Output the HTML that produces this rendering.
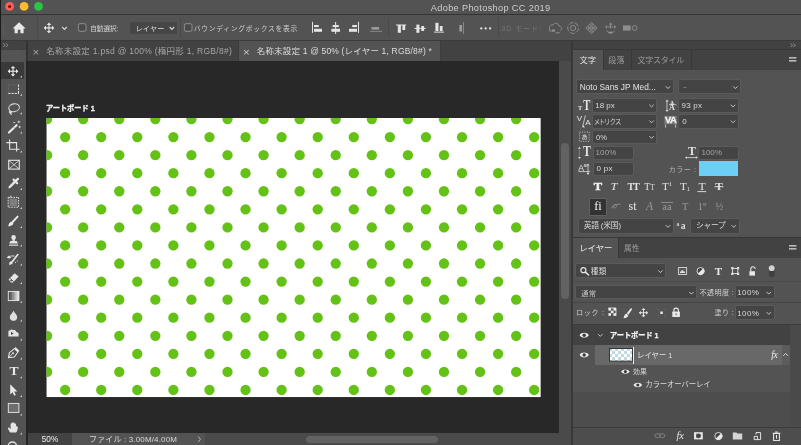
<!DOCTYPE html>
<html lang="ja">
<head>
<meta charset="utf-8">
<title>Adobe Photoshop CC 2019</title>
<style>
*{box-sizing:border-box;margin:0;padding:0}
html,body{width:801px;height:445px;overflow:hidden;background:#535353}
body{position:relative;font-family:"Liberation Sans","Noto Sans CJK JP",sans-serif;font-size:8px;color:#d6d6d6;line-height:12px}
.a{position:absolute}
.t{position:absolute;white-space:nowrap;line-height:12px;height:12px;transform-origin:0 50%}
.f{position:absolute;background:#444444;border-radius:1.2px;box-shadow:0 0 0 0.8px #5d5d5d}
.s{position:absolute;white-space:nowrap;font-family:"Liberation Serif",serif;font-weight:bold;line-height:14px;height:14px;color:#e4e4e4;text-align:center}
svg{position:absolute;left:0;top:0;overflow:visible}
</style>
</head>
<body>
<!-- ===== title bar ===== -->
<div class="a" style="left:0;top:0;width:801px;height:14px;background:#535353"></div>
<div class="a" style="left:0;top:14px;width:801px;height:1px;background:#343434"></div>

<!-- ===== options bar ===== -->
<div class="a" style="left:0;top:15px;width:801px;height:25px;background:#535353"></div>
<div class="a" style="left:0;top:40px;width:801px;height:1px;background:#3b3b3b"></div>
<div class="a" style="left:37px;top:16px;width:1px;height:23px;background:#4a4a4a"></div>
<div class="a" style="left:180px;top:18px;width:1px;height:19px;background:#4a4a4a"></div>
<div class="a" style="left:388px;top:18px;width:1px;height:19px;background:#4a4a4a"></div>
<div class="a" style="left:498px;top:18px;width:1px;height:19px;background:#4a4a4a"></div>
<div class="f" style="left:129.5px;top:22px;width:47.5px;height:12px;box-shadow:none;background:#464646"></div>

<!-- ===== document tab row ===== -->
<div class="a" style="left:27.5px;top:41px;width:543.5px;height:20.3px;background:#424242"></div>
<div class="a" style="left:238.6px;top:41px;width:201.6px;height:20.3px;background:#535353"></div>
<div class="a" style="left:237.8px;top:41px;width:0.8px;height:20px;background:#3b3b3b"></div>
<div class="a" style="left:440px;top:41px;width:1px;height:20px;background:#3d3d3d"></div>

<!-- ===== canvas area ===== -->
<div class="a" style="left:28px;top:61.3px;width:531px;height:371.7px;background:#282828"></div>
<svg style="left:0;top:0" width="801" height="445" viewBox="0 0 801 445">
<defs><clipPath id="cp"><rect x="46.55" y="118" width="494.1" height="279.05"/></clipPath></defs>
<rect x="46.55" y="118" width="494.1" height="279.05" fill="#ffffff"/>
<g clip-path="url(#cp)" fill="#63c215">
<circle cx="47.10" cy="119.00" r="5.15"/>
<circle cx="83.18" cy="119.00" r="5.15"/>
<circle cx="119.26" cy="119.00" r="5.15"/>
<circle cx="155.34" cy="119.00" r="5.15"/>
<circle cx="191.42" cy="119.00" r="5.15"/>
<circle cx="227.50" cy="119.00" r="5.15"/>
<circle cx="263.58" cy="119.00" r="5.15"/>
<circle cx="299.66" cy="119.00" r="5.15"/>
<circle cx="335.74" cy="119.00" r="5.15"/>
<circle cx="371.82" cy="119.00" r="5.15"/>
<circle cx="407.90" cy="119.00" r="5.15"/>
<circle cx="443.98" cy="119.00" r="5.15"/>
<circle cx="480.06" cy="119.00" r="5.15"/>
<circle cx="516.14" cy="119.00" r="5.15"/>
<circle cx="65.14" cy="137.06" r="5.15"/>
<circle cx="101.22" cy="137.06" r="5.15"/>
<circle cx="137.30" cy="137.06" r="5.15"/>
<circle cx="173.38" cy="137.06" r="5.15"/>
<circle cx="209.46" cy="137.06" r="5.15"/>
<circle cx="245.54" cy="137.06" r="5.15"/>
<circle cx="281.62" cy="137.06" r="5.15"/>
<circle cx="317.70" cy="137.06" r="5.15"/>
<circle cx="353.78" cy="137.06" r="5.15"/>
<circle cx="389.86" cy="137.06" r="5.15"/>
<circle cx="425.94" cy="137.06" r="5.15"/>
<circle cx="462.02" cy="137.06" r="5.15"/>
<circle cx="498.10" cy="137.06" r="5.15"/>
<circle cx="534.18" cy="137.06" r="5.15"/>
<circle cx="47.10" cy="155.13" r="5.15"/>
<circle cx="83.18" cy="155.13" r="5.15"/>
<circle cx="119.26" cy="155.13" r="5.15"/>
<circle cx="155.34" cy="155.13" r="5.15"/>
<circle cx="191.42" cy="155.13" r="5.15"/>
<circle cx="227.50" cy="155.13" r="5.15"/>
<circle cx="263.58" cy="155.13" r="5.15"/>
<circle cx="299.66" cy="155.13" r="5.15"/>
<circle cx="335.74" cy="155.13" r="5.15"/>
<circle cx="371.82" cy="155.13" r="5.15"/>
<circle cx="407.90" cy="155.13" r="5.15"/>
<circle cx="443.98" cy="155.13" r="5.15"/>
<circle cx="480.06" cy="155.13" r="5.15"/>
<circle cx="516.14" cy="155.13" r="5.15"/>
<circle cx="65.14" cy="173.19" r="5.15"/>
<circle cx="101.22" cy="173.19" r="5.15"/>
<circle cx="137.30" cy="173.19" r="5.15"/>
<circle cx="173.38" cy="173.19" r="5.15"/>
<circle cx="209.46" cy="173.19" r="5.15"/>
<circle cx="245.54" cy="173.19" r="5.15"/>
<circle cx="281.62" cy="173.19" r="5.15"/>
<circle cx="317.70" cy="173.19" r="5.15"/>
<circle cx="353.78" cy="173.19" r="5.15"/>
<circle cx="389.86" cy="173.19" r="5.15"/>
<circle cx="425.94" cy="173.19" r="5.15"/>
<circle cx="462.02" cy="173.19" r="5.15"/>
<circle cx="498.10" cy="173.19" r="5.15"/>
<circle cx="534.18" cy="173.19" r="5.15"/>
<circle cx="47.10" cy="191.26" r="5.15"/>
<circle cx="83.18" cy="191.26" r="5.15"/>
<circle cx="119.26" cy="191.26" r="5.15"/>
<circle cx="155.34" cy="191.26" r="5.15"/>
<circle cx="191.42" cy="191.26" r="5.15"/>
<circle cx="227.50" cy="191.26" r="5.15"/>
<circle cx="263.58" cy="191.26" r="5.15"/>
<circle cx="299.66" cy="191.26" r="5.15"/>
<circle cx="335.74" cy="191.26" r="5.15"/>
<circle cx="371.82" cy="191.26" r="5.15"/>
<circle cx="407.90" cy="191.26" r="5.15"/>
<circle cx="443.98" cy="191.26" r="5.15"/>
<circle cx="480.06" cy="191.26" r="5.15"/>
<circle cx="516.14" cy="191.26" r="5.15"/>
<circle cx="65.14" cy="209.32" r="5.15"/>
<circle cx="101.22" cy="209.32" r="5.15"/>
<circle cx="137.30" cy="209.32" r="5.15"/>
<circle cx="173.38" cy="209.32" r="5.15"/>
<circle cx="209.46" cy="209.32" r="5.15"/>
<circle cx="245.54" cy="209.32" r="5.15"/>
<circle cx="281.62" cy="209.32" r="5.15"/>
<circle cx="317.70" cy="209.32" r="5.15"/>
<circle cx="353.78" cy="209.32" r="5.15"/>
<circle cx="389.86" cy="209.32" r="5.15"/>
<circle cx="425.94" cy="209.32" r="5.15"/>
<circle cx="462.02" cy="209.32" r="5.15"/>
<circle cx="498.10" cy="209.32" r="5.15"/>
<circle cx="534.18" cy="209.32" r="5.15"/>
<circle cx="47.10" cy="227.39" r="5.15"/>
<circle cx="83.18" cy="227.39" r="5.15"/>
<circle cx="119.26" cy="227.39" r="5.15"/>
<circle cx="155.34" cy="227.39" r="5.15"/>
<circle cx="191.42" cy="227.39" r="5.15"/>
<circle cx="227.50" cy="227.39" r="5.15"/>
<circle cx="263.58" cy="227.39" r="5.15"/>
<circle cx="299.66" cy="227.39" r="5.15"/>
<circle cx="335.74" cy="227.39" r="5.15"/>
<circle cx="371.82" cy="227.39" r="5.15"/>
<circle cx="407.90" cy="227.39" r="5.15"/>
<circle cx="443.98" cy="227.39" r="5.15"/>
<circle cx="480.06" cy="227.39" r="5.15"/>
<circle cx="516.14" cy="227.39" r="5.15"/>
<circle cx="65.14" cy="245.46" r="5.15"/>
<circle cx="101.22" cy="245.46" r="5.15"/>
<circle cx="137.30" cy="245.46" r="5.15"/>
<circle cx="173.38" cy="245.46" r="5.15"/>
<circle cx="209.46" cy="245.46" r="5.15"/>
<circle cx="245.54" cy="245.46" r="5.15"/>
<circle cx="281.62" cy="245.46" r="5.15"/>
<circle cx="317.70" cy="245.46" r="5.15"/>
<circle cx="353.78" cy="245.46" r="5.15"/>
<circle cx="389.86" cy="245.46" r="5.15"/>
<circle cx="425.94" cy="245.46" r="5.15"/>
<circle cx="462.02" cy="245.46" r="5.15"/>
<circle cx="498.10" cy="245.46" r="5.15"/>
<circle cx="534.18" cy="245.46" r="5.15"/>
<circle cx="47.10" cy="263.52" r="5.15"/>
<circle cx="83.18" cy="263.52" r="5.15"/>
<circle cx="119.26" cy="263.52" r="5.15"/>
<circle cx="155.34" cy="263.52" r="5.15"/>
<circle cx="191.42" cy="263.52" r="5.15"/>
<circle cx="227.50" cy="263.52" r="5.15"/>
<circle cx="263.58" cy="263.52" r="5.15"/>
<circle cx="299.66" cy="263.52" r="5.15"/>
<circle cx="335.74" cy="263.52" r="5.15"/>
<circle cx="371.82" cy="263.52" r="5.15"/>
<circle cx="407.90" cy="263.52" r="5.15"/>
<circle cx="443.98" cy="263.52" r="5.15"/>
<circle cx="480.06" cy="263.52" r="5.15"/>
<circle cx="516.14" cy="263.52" r="5.15"/>
<circle cx="65.14" cy="281.59" r="5.15"/>
<circle cx="101.22" cy="281.59" r="5.15"/>
<circle cx="137.30" cy="281.59" r="5.15"/>
<circle cx="173.38" cy="281.59" r="5.15"/>
<circle cx="209.46" cy="281.59" r="5.15"/>
<circle cx="245.54" cy="281.59" r="5.15"/>
<circle cx="281.62" cy="281.59" r="5.15"/>
<circle cx="317.70" cy="281.59" r="5.15"/>
<circle cx="353.78" cy="281.59" r="5.15"/>
<circle cx="389.86" cy="281.59" r="5.15"/>
<circle cx="425.94" cy="281.59" r="5.15"/>
<circle cx="462.02" cy="281.59" r="5.15"/>
<circle cx="498.10" cy="281.59" r="5.15"/>
<circle cx="534.18" cy="281.59" r="5.15"/>
<circle cx="47.10" cy="299.65" r="5.15"/>
<circle cx="83.18" cy="299.65" r="5.15"/>
<circle cx="119.26" cy="299.65" r="5.15"/>
<circle cx="155.34" cy="299.65" r="5.15"/>
<circle cx="191.42" cy="299.65" r="5.15"/>
<circle cx="227.50" cy="299.65" r="5.15"/>
<circle cx="263.58" cy="299.65" r="5.15"/>
<circle cx="299.66" cy="299.65" r="5.15"/>
<circle cx="335.74" cy="299.65" r="5.15"/>
<circle cx="371.82" cy="299.65" r="5.15"/>
<circle cx="407.90" cy="299.65" r="5.15"/>
<circle cx="443.98" cy="299.65" r="5.15"/>
<circle cx="480.06" cy="299.65" r="5.15"/>
<circle cx="516.14" cy="299.65" r="5.15"/>
<circle cx="65.14" cy="317.72" r="5.15"/>
<circle cx="101.22" cy="317.72" r="5.15"/>
<circle cx="137.30" cy="317.72" r="5.15"/>
<circle cx="173.38" cy="317.72" r="5.15"/>
<circle cx="209.46" cy="317.72" r="5.15"/>
<circle cx="245.54" cy="317.72" r="5.15"/>
<circle cx="281.62" cy="317.72" r="5.15"/>
<circle cx="317.70" cy="317.72" r="5.15"/>
<circle cx="353.78" cy="317.72" r="5.15"/>
<circle cx="389.86" cy="317.72" r="5.15"/>
<circle cx="425.94" cy="317.72" r="5.15"/>
<circle cx="462.02" cy="317.72" r="5.15"/>
<circle cx="498.10" cy="317.72" r="5.15"/>
<circle cx="534.18" cy="317.72" r="5.15"/>
<circle cx="47.10" cy="335.78" r="5.15"/>
<circle cx="83.18" cy="335.78" r="5.15"/>
<circle cx="119.26" cy="335.78" r="5.15"/>
<circle cx="155.34" cy="335.78" r="5.15"/>
<circle cx="191.42" cy="335.78" r="5.15"/>
<circle cx="227.50" cy="335.78" r="5.15"/>
<circle cx="263.58" cy="335.78" r="5.15"/>
<circle cx="299.66" cy="335.78" r="5.15"/>
<circle cx="335.74" cy="335.78" r="5.15"/>
<circle cx="371.82" cy="335.78" r="5.15"/>
<circle cx="407.90" cy="335.78" r="5.15"/>
<circle cx="443.98" cy="335.78" r="5.15"/>
<circle cx="480.06" cy="335.78" r="5.15"/>
<circle cx="516.14" cy="335.78" r="5.15"/>
<circle cx="65.14" cy="353.85" r="5.15"/>
<circle cx="101.22" cy="353.85" r="5.15"/>
<circle cx="137.30" cy="353.85" r="5.15"/>
<circle cx="173.38" cy="353.85" r="5.15"/>
<circle cx="209.46" cy="353.85" r="5.15"/>
<circle cx="245.54" cy="353.85" r="5.15"/>
<circle cx="281.62" cy="353.85" r="5.15"/>
<circle cx="317.70" cy="353.85" r="5.15"/>
<circle cx="353.78" cy="353.85" r="5.15"/>
<circle cx="389.86" cy="353.85" r="5.15"/>
<circle cx="425.94" cy="353.85" r="5.15"/>
<circle cx="462.02" cy="353.85" r="5.15"/>
<circle cx="498.10" cy="353.85" r="5.15"/>
<circle cx="534.18" cy="353.85" r="5.15"/>
<circle cx="47.10" cy="371.91" r="5.15"/>
<circle cx="83.18" cy="371.91" r="5.15"/>
<circle cx="119.26" cy="371.91" r="5.15"/>
<circle cx="155.34" cy="371.91" r="5.15"/>
<circle cx="191.42" cy="371.91" r="5.15"/>
<circle cx="227.50" cy="371.91" r="5.15"/>
<circle cx="263.58" cy="371.91" r="5.15"/>
<circle cx="299.66" cy="371.91" r="5.15"/>
<circle cx="335.74" cy="371.91" r="5.15"/>
<circle cx="371.82" cy="371.91" r="5.15"/>
<circle cx="407.90" cy="371.91" r="5.15"/>
<circle cx="443.98" cy="371.91" r="5.15"/>
<circle cx="480.06" cy="371.91" r="5.15"/>
<circle cx="516.14" cy="371.91" r="5.15"/>
<circle cx="65.14" cy="389.98" r="5.15"/>
<circle cx="101.22" cy="389.98" r="5.15"/>
<circle cx="137.30" cy="389.98" r="5.15"/>
<circle cx="173.38" cy="389.98" r="5.15"/>
<circle cx="209.46" cy="389.98" r="5.15"/>
<circle cx="245.54" cy="389.98" r="5.15"/>
<circle cx="281.62" cy="389.98" r="5.15"/>
<circle cx="317.70" cy="389.98" r="5.15"/>
<circle cx="353.78" cy="389.98" r="5.15"/>
<circle cx="389.86" cy="389.98" r="5.15"/>
<circle cx="425.94" cy="389.98" r="5.15"/>
<circle cx="462.02" cy="389.98" r="5.15"/>
<circle cx="498.10" cy="389.98" r="5.15"/>
<circle cx="534.18" cy="389.98" r="5.15"/>
</g></svg>

<!-- vertical scrollbar -->
<div class="a" style="left:559px;top:61px;width:12px;height:384px;background:#4a4a4a"></div>
<div class="a" style="left:561px;top:142.5px;width:8px;height:156px;border-radius:4px;background:#626262"></div>

<!-- ===== status bar ===== -->
<div class="a" style="left:28px;top:433px;width:531px;height:12px;background:#4a4a4a"></div>
<div class="a" style="left:28px;top:433px;width:44px;height:12px;background:#424242"></div>
<div class="a" style="left:72px;top:433px;width:133px;height:12px;background:#535353"></div>
<div class="a" style="left:306px;top:436px;width:132px;height:7px;border-radius:3.5px;background:#626262"></div>

<!-- ===== left toolbar ===== -->
<div class="a" style="left:0;top:41px;width:27.5px;height:20.3px;background:#333333"></div><div class="a" style="left:0;top:61.3px;width:28.2px;height:384px;background:#242424"></div>
<div class="a" style="left:1px;top:41px;width:25.3px;height:8.6px;background:#424242"></div>
<div class="a" style="left:1px;top:49.6px;width:25.3px;height:395.4px;background:#535353"></div>
<div class="a" style="left:1.2px;top:62.3px;width:23px;height:16.7px;background:#3a3a3a"></div>
<div class="a" style="left:0;top:0;width:1.2px;height:445px;background:#1c1c1c"></div>

<!-- ===== right panels ===== -->
<div class="a" style="left:571px;top:41px;width:230px;height:404px;background:#383838"></div>
<div class="a" style="left:573px;top:41px;width:228px;height:8px;background:#424242"></div>
<!-- character panel -->
<div class="a" style="left:573px;top:49.5px;width:228px;height:20.5px;background:#424242"></div>
<div class="a" style="left:573px;top:49.5px;width:29.5px;height:20.5px;background:#535353"></div>
<div class="a" style="left:602.5px;top:49.5px;width:1px;height:20.5px;background:#383838"></div>
<div class="a" style="left:631px;top:49.5px;width:1px;height:20.5px;background:#383838"></div>
<div class="a" style="left:691px;top:49.5px;width:1px;height:20.5px;background:#383838"></div>
<div class="a" style="left:573px;top:70px;width:228px;height:167px;background:#535353"></div>
<div class="f" style="left:577px;top:80px;width:96px;height:12.5px"></div>
<div class="f" style="left:678.5px;top:80px;width:61px;height:12.5px"></div>
<div class="f" style="left:593px;top:99px;width:63px;height:12.5px"></div>
<div class="f" style="left:678.5px;top:99px;width:59.5px;height:12.5px"></div>
<div class="f" style="left:593px;top:115px;width:63px;height:12.5px"></div>
<div class="f" style="left:678.5px;top:115px;width:59.5px;height:12.5px"></div>
<div class="f" style="left:593px;top:130.5px;width:63px;height:12.5px"></div>
<div class="f" style="left:593.5px;top:146.5px;width:39.5px;height:12px"></div>
<div class="f" style="left:699px;top:146.5px;width:39px;height:12px"></div>
<div class="f" style="left:593.5px;top:162.5px;width:39.5px;height:12px"></div>
<div class="a" style="left:698.7px;top:160.5px;width:39.6px;height:15.4px;background:#6ecff6"></div>
<div class="a" style="left:590px;top:199px;width:16px;height:15.6px;background:#333333;box-shadow:0 0 0 0.6px #6a6a6a"></div>
<div class="f" style="left:578.5px;top:219px;width:94.5px;height:13.5px"></div>
<div class="f" style="left:690.5px;top:219px;width:48px;height:13.5px"></div>
<!-- layers panel -->
<div class="a" style="left:573px;top:238px;width:228px;height:20px;background:#424242"></div>
<div class="a" style="left:573px;top:238px;width:45px;height:20px;background:#535353"></div>
<div class="a" style="left:618px;top:238px;width:1px;height:20px;background:#383838"></div>
<div class="a" style="left:573px;top:258px;width:228px;height:187px;background:#535353"></div>
<div class="f" style="left:576px;top:264px;width:89px;height:13px"></div>
<div class="f" style="left:576px;top:285.5px;width:120px;height:12.5px"></div>
<div class="f" style="left:735.5px;top:285.5px;width:38.5px;height:12.5px"></div>
<div class="a" style="left:573px;top:302px;width:228px;height:1px;background:#454545"></div>
<div class="f" style="left:735.5px;top:305.5px;width:38.5px;height:13.5px"></div>
<div class="a" style="left:573px;top:323.5px;width:228px;height:1px;background:#3c3c3c"></div>
<div class="a" style="left:573px;top:324.5px;width:217px;height:20px;background:#424242"></div>
<div class="a" style="left:573px;top:344.5px;width:217px;height:47.5px;background:#535353"></div>
<div class="a" style="left:595px;top:345px;width:187px;height:19.5px;background:#686868"></div>
<div class="a" style="left:782px;top:345px;width:8px;height:19.5px;background:#5c5c5c"></div>
<div class="a" style="left:573px;top:392px;width:217px;height:35px;background:#4d4d4d"></div>
<div class="a" style="left:790px;top:324.5px;width:11px;height:102.5px;background:#4a4a4a"></div>
<div class="a" style="left:573px;top:427px;width:228px;height:1px;background:#3c3c3c"></div>
<div class="a" style="left:573px;top:428px;width:228px;height:17px;background:#4d4d4d"></div>
<!-- layer thumbnail -->
<svg style="left:609px;top:348px" width="24" height="14" viewBox="0 0 24 14">
  <defs><pattern id="chk" width="6" height="6" patternUnits="userSpaceOnUse"><rect width="6" height="6" fill="#fdfdfd"/><rect width="3" height="3" fill="#c2d9e2"/><rect x="3" y="3" width="3" height="3" fill="#c2d9e2"/></pattern></defs>
  <rect x="0.5" y="0.5" width="23" height="12.6" fill="url(#chk)" stroke="#2c2c2c" stroke-width="0.9"/>
</svg>
<div class="a" style="left:633.3px;top:346.5px;width:0.9px;height:17px;background:#f0f0f0"></div>

<div class="a" id="fg" style="left:0;top:0;width:801px;height:445px;will-change:transform;filter:blur(0.45px)">
<!-- panel icons -->
<svg width="801" height="445" viewBox="0 0 801 445">
  <defs>
    <g id="chev"><path d="M-2.2 -1.05 L0 1.15 L2.2 -1.05" fill="none" stroke="#d4d4d4" stroke-width="0.9"/></g>
    <g id="eye"><path d="M-4.6 0 C-3 -3.2 3 -3.2 4.6 0 C3 3.2 -3 3.2 -4.6 0 Z" fill="#ededed"/><circle cx="0" cy="0" r="1.7" fill="#3c3c3c"/></g>
  </defs>
  <!-- dropdown chevrons -->
  <use href="#chev" x="667.9" y="87.4"/><use href="#chev" x="735.4" y="87.4"/>
  <use href="#chev" x="651.6" y="105.8"/><use href="#chev" x="733" y="105.8"/>
  <use href="#chev" x="651.6" y="121.6"/><use href="#chev" x="733" y="121.6"/>
  <use href="#chev" x="651.6" y="137.2"/>
  <use href="#chev" x="667.9" y="226.2"/><use href="#chev" x="733.8" y="226.2"/>
  <use href="#chev" x="660.4" y="271.4"/>
  <use href="#chev" x="691.4" y="293"/><use href="#chev" x="768.8" y="293"/><use href="#chev" x="768.8" y="313.2"/>
  <!-- character icons: arrows & decorations -->
  <g fill="none" stroke="#dcdcdc" stroke-width="0.8">
    <!-- leading arrow -->
    <path d="M667 101 V110.4"/>
    <!-- kerning slash -->
    <path d="M585.4 115.4 L582.6 126.6"/>
    <!-- tracking bar -->
    <path d="M665.6 124.6 V127.6 M675.6 124.6 V127.6"/><path d="M669 104.7 H676.4" stroke-width="0.7"/>
    <!-- tsume box -->
    <rect x="579.6" y="132" width="9.6" height="9.4" stroke-dasharray="1.1 1.3" stroke-width="0.7"/>
    <!-- vertical scale arrow -->
    <path d="M579.4 149.4 V156.4" stroke="#9a9a9a" stroke-width="0.6"/>
    <!-- horizontal scale arrow -->
    <path d="M686.4 157.6 H696.4"/>
    <!-- baseline -->
    <path d="M578.6 171.6 H590" /><path d="M588 165 V173.6"/>
  </g>
  <g fill="#dcdcdc">
    <path d="M667 99.4 l1.5 2 h-3z M667 112 l1.5 -2 h-3z"/>
    <path d="M579.4 146.8 l1.4 1.9 h-2.8z M579.4 159 l1.4 -1.9 h-2.8z"/>
    <path d="M685 157.6 l1.9 -1.4 v2.8z M697.8 157.6 l-1.9 -1.4 v2.8z"/>
    <path d="M588 163.6 l1.4 1.9 h-2.8z M588 175 l1.4 -1.9 h-2.8z"/>
    <path d="M583.6 125 l1.2 2.6 l-2.6 -0.4z"/>
  </g>
  <rect x="664.4" y="116" width="12.4" height="8.2" fill="#7c7c7c"/>
  <!-- underline / strike -->
  <rect x="697.4" y="191.2" width="8.8" height="0.9" fill="#e6e6e6"/>
  <rect x="714.6" y="186.2" width="8.8" height="1" fill="#e6e6e6"/>
  <rect x="661" y="202.2" width="12" height="0.8" fill="#9a9a9a"/>
  <!-- swash -->
  <path d="M611.6 208.2 c1.6 -3.6 4.6 -4.6 5 -2.6 c0.4 2 -3.4 3.4 -3.6 1.4 c0 -1.6 4.6 -3.2 7.6 -2.8" fill="none" stroke="#8e8e8e" stroke-width="0.9"/>

  <!-- search icon -->
  <circle cx="583.4" cy="270.2" r="2.5" fill="none" stroke="#e4e4e4" stroke-width="1.2"/>
  <path d="M585.4 272.2 L588.6 275" stroke="#e4e4e4" stroke-width="1.6" stroke-linecap="round"/>
  <!-- filter icons -->
  <rect x="678.6" y="267.6" width="8" height="6.8" fill="none" stroke="#e2e2e2" stroke-width="0.9"/>
  <path d="M680 273 v-1.4 h1.4 v-1.4 h2 v1.4 h1.6 v1.4z" fill="#e2e2e2"/>
  <circle cx="700.5" cy="271" r="3.5" fill="#3e3e3e" stroke="#e2e2e2" stroke-width="0.9"/>
  <path d="M703.3 268.2 A3.96 3.96 0 0 1 697.7 273.8 Z" fill="#e8e8e8"/>
  <g fill="none" stroke="#e4e4e4"><rect x="732.6" y="268.4" width="5.2" height="5.2" stroke-width="0.9"/></g>
  <g fill="#e4e4e4"><rect x="731.2" y="267" width="2.2" height="2.2"/><rect x="737" y="267" width="2.2" height="2.2"/><rect x="731.2" y="272.8" width="2.2" height="2.2"/><rect x="737" y="272.8" width="2.2" height="2.2"/></g>
  <path d="M750.8 271.4 V269 a2.2 2.2 0 0 1 4.4 0" fill="none" stroke="#e4e4e4" stroke-width="1.1"/>
  <rect x="749.4" y="271.2" width="5.6" height="4.4" fill="#e8e8e8"/>
  <rect x="768.8" y="266.4" width="5.8" height="10.8" rx="2.9" fill="#404040"/>
  <circle cx="771.7" cy="268.2" r="2.9" fill="#d2d2d2"/>
  <!-- separator -->
  <rect x="573" y="281.2" width="228" height="0.8" fill="#494949"/>

  <!-- lock icons -->
  <g fill="#ececec">
    <rect x="608.4" y="308" width="2.6" height="2.6"/><rect x="613.4" y="308" width="2.6" height="2.6"/>
    <rect x="610.9" y="310.6" width="2.6" height="2.6"/>
    <rect x="608.4" y="313.2" width="2.6" height="2.6"/><rect x="613.4" y="313.2" width="2.6" height="2.6"/>
  </g>
  <path d="M608.4 308 H616 V315.8" fill="none" stroke="#ececec" stroke-width="0.8"/>
  <path d="M623.6 318.2 C623.8 316 624.6 314.4 626.4 313.4 L628.4 315.4 C627.6 317.2 626 318.2 623.6 318.2 Z" fill="#e8e8e8"/>
  <path d="M626.8 313.2 L630.6 308.6 C631.4 307.8 632.6 308.8 631.8 309.8 L628.4 314.8 Z" fill="#e8e8e8"/>
  <path transform="translate(643.5 312.7) scale(0.88) translate(-49 -27.9)" fill="#e8e8e8" d="M49.00 22.60 L51.30 24.90 L49.55 24.90 L49.55 27.35 L52.00 27.35 L52.00 25.60 L54.30 27.90 L52.00 30.20 L52.00 28.45 L49.55 28.45 L49.55 30.90 L51.30 30.90 L49.00 33.20 L46.70 30.90 L48.45 30.90 L48.45 28.45 L46.00 28.45 L46.00 30.20 L43.70 27.90 L46.00 25.60 L46.00 27.35 L48.45 27.35 L48.45 24.90 L46.70 24.90 Z"/>
  <rect x="660.3" y="311.5" width="2.5" height="2.5" fill="#e8e8e8"/>
  <path d="M657.6 309.6 h1.4 M664 309.6 h1.4 M657.6 316 h1.4 M664 316 h1.4" stroke="#6e6e6e" stroke-width="0.8"/>
  <path d="M673.8 312 V310.4 a2.3 2.3 0 0 1 4.6 0 V312" fill="none" stroke="#e8e8e8" stroke-width="1.1"/>
  <rect x="672.3" y="311.6" width="7.6" height="5.4" rx="0.6" fill="#e8e8e8"/>
  <rect x="675.6" y="313.4" width="1" height="1.8" fill="#555"/>

  <!-- layer rows -->
  <use href="#eye" x="584.2" y="335.2"/>
  <use href="#eye" x="584.2" y="355"/>
  <use href="#eye" x="625.4" y="371.6" transform="translate(625.4 371.6) scale(0.92) translate(-625.4 -371.6)"/>
  <use href="#eye" x="637.8" y="385" transform="translate(637.8 385) scale(0.92) translate(-637.8 -385)"/>
  <use href="#chev" x="600.3" y="335.2"/>
  <path d="M783.2 355.8 L785.6 353.4 L788 355.8" fill="none" stroke="#d8d8d8" stroke-width="1"/>

  <!-- bottom icons -->
  <g fill="none" stroke="#858585" stroke-width="0.9">
    <rect x="655" y="433.8" width="5.2" height="3.8" rx="1.9"/><rect x="659.6" y="433.8" width="5.2" height="3.8" rx="1.9"/>
  </g>
  <rect x="694" y="432.2" width="8.8" height="7.2" fill="#e6e6e6"/>
  <path d="M696.4 433.6 L700.6 435.8 L696.4 438 Z" fill="#444"/>
  <circle cx="698.6" cy="435.8" r="2.4" fill="#444"/>
  <circle cx="718.4" cy="436" r="3.6" fill="#424242" stroke="#e4e4e4" stroke-width="0.9"/>
  <path d="M721.2 433.2 A3.96 3.96 0 0 1 715.6 438.8 Z" fill="#e8e8e8"/>
  <path d="M732.8 439.4 V432.4 H736.4 L737.4 433.6 H742.2 V439.4 Z" fill="#d6d6d6"/>
  <path d="M756 434.6 V432.6 H760.6 V439.6 H757.4 M754.2 436.4 H757.6 V439.6 H754.2 Z" fill="none" stroke="#e4e4e4" stroke-width="1"/>
  <path d="M773.6 433.4 H779.4 V440.4 H773.6 Z M772.6 433.2 H780.4 M775.2 432 H777.8 M776.5 435 V438.8" fill="none" stroke="#e6e6e6" stroke-width="1.05"/>
</svg>
<!-- glyph icons as text -->
<div class="s" style="left:577.4px;top:101.3px;width:6px;font-size:7px;transform:scaleX(0.9)">T</div>
<div class="s" style="left:582.2px;top:98.2px;width:9px;font-size:15.2px;transform:scaleX(0.7)">T</div>
<div class="s" style="left:668px;top:95.6px;width:8px;font-size:6.5px">A</div>
<div class="s" style="left:668px;top:101.4px;width:8px;font-size:8px">A</div>
<div class="s" style="left:575.5px;top:112.4px;width:8px;font-size:8px;font-weight:normal;font-family:'Liberation Sans',sans-serif">V</div>
<div class="s" style="left:584px;top:115.6px;width:8px;font-size:8px;font-weight:normal;font-family:'Liberation Sans',sans-serif">A</div>
<div class="s" style="left:663.2px;top:113.2px;width:15px;font-size:9.4px;font-family:'Liberation Sans',sans-serif;letter-spacing:-0.5px;color:#f4f4f4;-webkit-text-stroke:0.3px #f4f4f4">VA</div>
<div class="s" style="left:579px;top:129.8px;width:11px;font-size:6.2px;font-weight:normal;font-family:'Noto Sans CJK JP',sans-serif">あ</div>
<div class="s" style="left:582.2px;top:145.2px;width:10px;font-size:13.6px;transform:scaleX(0.86)">T</div>
<div class="s" style="left:686.6px;top:144.2px;width:10px;font-size:12.4px;transform:scaleX(0.95)">T</div>
<div class="s" style="left:577.6px;top:160.6px;width:7px;font-size:8.6px;font-family:'Liberation Sans',sans-serif;font-weight:normal">A</div>
<div class="s" style="left:581.6px;top:158.2px;width:7px;font-size:6px;font-family:'Liberation Sans',sans-serif;font-weight:normal">a</div>
<!-- style row -->
<div class="s" style="left:590.5px;top:179.6px;width:14px;font-size:10.4px;color:#f0f0f0;-webkit-text-stroke:0.5px #f0f0f0;transform:scaleX(1.2)">T</div>
<div class="s" style="left:607.4px;top:179.6px;width:14px;font-size:10.4px;font-style:italic;font-weight:normal;transform:scaleX(1.2)">T</div>
<div class="s" style="left:622.6px;top:179.6px;width:20px;font-size:10.4px;letter-spacing:-1.2px;transform:scaleX(0.98)">TT</div>
<div class="s" style="left:640px;top:179.6px;width:19px;font-size:10.4px;font-weight:normal;transform:scaleX(0.95)">T<span style="font-size:7.4px">T</span></div>
<div class="s" style="left:659.6px;top:179.9px;width:14px;font-size:9.8px;font-weight:normal;transform:scaleX(1.15)">T<span style="font-size:5.5px;position:relative;top:-4px;line-height:1px">1</span></div>
<div class="s" style="left:677.6px;top:179.9px;width:14px;font-size:9.8px;font-weight:normal;transform:scaleX(1.15)">T<span style="font-size:5.5px;position:relative;top:1.4px;line-height:1px">1</span></div>
<div class="s" style="left:694.8px;top:179.6px;width:14px;font-size:10.2px;font-weight:normal;transform:scaleX(1.15)">T</div>
<div class="s" style="left:712px;top:179.8px;width:14px;font-size:10.2px;transform:scaleX(1.1)">T</div>
<!-- opentype row -->
<div class="s" style="left:590px;top:199.2px;width:16px;font-size:12.4px;font-weight:normal;color:#f4f4f4">fi</div>
<div class="s" style="left:625px;top:199.2px;width:15px;font-size:12px;font-weight:normal;color:#e6e6e6">st</div>
<div class="s" style="left:642px;top:199.8px;width:15px;font-size:11.6px;font-style:italic;font-weight:normal;color:#9a9a9a">A</div>
<div class="s" style="left:659.5px;top:200.2px;width:15px;font-size:10.6px;font-weight:normal;color:#9a9a9a">aa</div>
<div class="s" style="left:677.6px;top:199.8px;width:15px;font-size:10.4px;font-weight:normal;color:#9a9a9a">T</div>
<div class="s" style="left:694.6px;top:199.8px;width:15px;font-size:10.4px;font-weight:normal;color:#9a9a9a">1<span style="font-size:5.6px;position:relative;top:-3.6px;line-height:1px">st</span></div>
<div class="s" style="left:712px;top:199.6px;width:15px;font-size:10.4px;font-weight:normal;color:#9a9a9a">½</div>
<!-- aa -->
<div class="s" style="left:675px;top:217.2px;width:6px;font-size:5.6px;color:#dcdcdc">a</div>
<div class="s" style="left:679.6px;top:218.6px;width:7px;font-size:9.6px;color:#dcdcdc">a</div>
<!-- filter T -->
<div class="s" style="left:712px;top:264px;width:13px;font-size:11px;color:#ececec">T</div>
<!-- fx -->
<div class="s" style="left:768.4px;top:348.2px;width:12px;font-size:9.6px;font-style:italic;font-weight:normal;color:#ececec;letter-spacing:-0.3px">fx</div>
<div class="s" style="left:673.5px;top:428.6px;width:13px;font-size:10.4px;font-style:italic;font-weight:normal;color:#e6e6e6;letter-spacing:-0.3px">fx</div>
<!-- toolbar icons -->
<svg width="801" height="445" viewBox="0 0 801 445">
  <defs>
    <linearGradient id="gr" x1="0" x2="1" y1="0" y2="0"><stop offset="0" stop-color="#3a3a3a"/><stop offset="1" stop-color="#f4f4f4"/></linearGradient>
  </defs>
  <!-- gripper -->
  <g fill="#5f5f5f"><rect x="6" y="52.6" width="1" height="1"/><rect x="8" y="52.6" width="1" height="1"/><rect x="10" y="52.6" width="1" height="1"/><rect x="12" y="52.6" width="1" height="1"/><rect x="14" y="52.6" width="1" height="1"/><rect x="16" y="52.6" width="1" height="1"/><rect x="18" y="52.6" width="1" height="1"/></g>
  <!-- flyout triangles -->
  <g fill="#cfcfcf">
    <path d="M22 75.4 v2 h-2z"/><path d="M22 93.8 v2 h-2z"/><path d="M22 112.3 v2 h-2z"/><path d="M22 131.4 v2 h-2z"/>
    <path d="M22 150.6 v2 h-2z"/><path d="M22 188 v2 h-2z"/><path d="M22 207 v2 h-2z"/>
    <path d="M22 226 v2 h-2z"/><path d="M22 244.6 v2 h-2z"/><path d="M22 263.4 v2 h-2z"/><path d="M22 282 v2 h-2z"/>
    <path d="M22 301 v2 h-2z"/><path d="M22 319.6 v2 h-2z"/><path d="M22 338.4 v2 h-2z"/><path d="M22 357.4 v2 h-2z"/>
    <path d="M22 376.2 v2 h-2z"/><path d="M22 395 v2 h-2z"/><path d="M22 413.4 v2 h-2z"/><path d="M22 432.4 v2 h-2z"/>
  </g>
  <!-- 1 move -->
  <path transform="translate(-36 43.3)" fill="#f0f0f0" d="M49.00 22.60 L51.30 24.90 L49.55 24.90 L49.55 27.35 L52.00 27.35 L52.00 25.60 L54.30 27.90 L52.00 30.20 L52.00 28.45 L49.55 28.45 L49.55 30.90 L51.30 30.90 L49.00 33.20 L46.70 30.90 L48.45 30.90 L48.45 28.45 L46.00 28.45 L46.00 30.20 L43.70 27.90 L46.00 25.60 L46.00 27.35 L48.45 27.35 L48.45 24.90 L46.70 24.90 Z"/>
  <!-- 2 marquee -->
  <path d="M8.3 93.4 H19 M18.5 84.5 V93.4" fill="none" stroke="#e8e8e8" stroke-width="1" stroke-dasharray="2.2 1"/>
  <path d="M8.6 84.8 H18 M8.6 84.8 V93" fill="none" stroke="#6c6c6c" stroke-width="0.7" stroke-dasharray="2.2 1"/>
  <!-- 3 lasso -->
  <g fill="none" stroke="#dadada" stroke-width="1.05">
    <ellipse cx="14.1" cy="107.7" rx="5.4" ry="3.9" transform="rotate(-12 14 107.7)"/>
    <path d="M10.2 110.4 c-1.4 1 -1 2.6 0.6 2.4 c1.2 -0.2 0.8 -1.6 -0.2 -1.2 c-0.6 1.4 0 2.4 1.2 3"/>
  </g>
  <!-- 4 magic wand -->
  <path d="M8.9 132.6 L16.6 125.2" fill="none" stroke="#e8e8e8" stroke-width="2.1" stroke-linecap="round"/>
  <path d="M14.2 127.4 L15.8 129" fill="none" stroke="#535353" stroke-width="0.7"/>
  <path d="M18.8 120.6 v2.6 M17.4 121.9 h2.8 M13 122.6 h2.2 M19.6 125.8 v2.4 M18.6 127 h2.2" fill="none" stroke="#e0e0e0" stroke-width="0.8"/>
  <!-- 5 crop -->
  <path d="M9.6 139.4 V149.3 H19.6 M6.4 142.6 H16.6 V151.6" fill="none" stroke="#e4e4e4" stroke-width="1.1"/>
  <!-- 6 frame -->
  <g fill="none" stroke="#e4e4e4"><rect x="8.7" y="160.3" width="10.6" height="8.8" stroke-width="1.1"/><path d="M8.7 160.3 L19.3 169.1 M19.3 160.3 L8.7 169.1" stroke-width="0.8"/></g>
  <!-- 7 eyedropper -->
  <path d="M8.2 188.6 L9 186 L14.2 180.8 L15.9 182.5 L10.7 187.7 Z" fill="#e6e6e6"/>
  <path d="M13.6 179.6 L17.2 183.2 M15.4 181.4 L18 178.8" fill="none" stroke="#eaeaea" stroke-width="2.2" stroke-linecap="round"/>
  <!-- 8 object/patch -->
  <rect x="9.6" y="198.6" width="7.6" height="7.4" fill="#7e7e7e"/>
  <rect x="8.2" y="197.4" width="10.4" height="9.8" fill="none" stroke="#e0e0e0" stroke-width="1" stroke-dasharray="1.6 1"/>
  <path d="M10.8 195.6 v2" stroke="#e0e0e0" stroke-width="0.9"/>
  <!-- 9 brush -->
  <path d="M8.2 226.4 C8.6 224 9.6 222.4 11.4 221.6 L13.4 223.6 C12.8 225.4 10.8 226.4 8.2 226.4 Z" fill="#eaeaea"/>
  <path d="M12.6 222 L17.6 216.6" fill="none" stroke="#eaeaea" stroke-width="1.9" stroke-linecap="round"/>
  <!-- 10 stamp -->
  <g fill="#e6e6e6">
    <circle cx="13.6" cy="237.4" r="2.3"/><rect x="12.5" y="238.6" width="2.2" height="3"/>
    <path d="M9.2 243.6 L10.4 241 H16.8 L18 243.6 Z"/><rect x="9" y="244.6" width="9.2" height="1.1"/>
  </g>
  <!-- 11 history brush -->
  <g fill="#e6e6e6">
    <path d="M9 265 L9.6 262 L12 261 L12.6 264 Z"/>
    <path d="M6.6 257.6 L9 255.6 L11.4 257.4 L9 258.4 Z"/>
  </g>
  <path d="M12.4 261.6 L17.8 254.6" fill="none" stroke="#e6e6e6" stroke-width="1.7" stroke-linecap="round"/>
  <path d="M10.6 256 H14.4" fill="none" stroke="#e6e6e6" stroke-width="0.9"/>
  <circle cx="15.4" cy="262.4" r="0.6" fill="#e0e0e0"/><circle cx="17.4" cy="261" r="0.6" fill="#e0e0e0"/>
  <!-- 12 eraser -->
  <path d="M8.6 279.6 L14.6 273.2 L18.6 276.6 L13 282.6 L10.8 282.6 Z" fill="#e6e6e6"/>
  <path d="M10.2 278.4 L13.6 281.6" stroke="#535353" stroke-width="0.9"/>
  <circle cx="11.2" cy="280.6" r="1" fill="#535353"/>
  <!-- 13 gradient -->
  <rect x="8.3" y="291.4" width="10.6" height="9.2" fill="url(#gr)" stroke="#ececec" stroke-width="0.9"/>
  <!-- 14 blur -->
  <path d="M13.6 310.4 C14.2 312.6 17.4 314.6 17.2 317.4 C17 319.6 15.4 320.8 13.6 320.8 C11.6 320.8 10 319.6 9.8 317.4 C9.6 314.6 13 312.6 13.6 310.4 Z" fill="#dedede"/>
  <!-- 15 dodge -->
  <path d="M8.4 336.4 V331.6 C8.4 330.6 9.2 330.2 10 330.6 C10.2 329.4 12.2 328.8 13.2 330.2 C14.6 329.8 16 330.4 16.2 331.8 L18.6 333 V336.4 Z" fill="#e4e4e4"/>
  <path d="M11 331.8 L13.6 333.4 L11 335 Z" fill="#4a4a4a"/>
  <!-- 16 pen -->
  <path d="M8.4 357.8 L9.4 352.6 L14.6 348.6 L18 352 L14.2 357 Z" fill="none" stroke="#e6e6e6" stroke-width="1.1" stroke-linejoin="round"/>
  <path d="M8.6 357.6 L12.6 353.6" stroke="#e6e6e6" stroke-width="0.9"/>
  <circle cx="13" cy="353.2" r="1" fill="#e6e6e6"/>
  <path d="M15 347.6 L18.8 351.4" stroke="#e6e6e6" stroke-width="1.6"/>
  <!-- 18 path select -->
  <path d="M10.2 384.2 L10.2 394.4 L12.6 392.2 L14.2 395.8 L15.8 395 L14.2 391.6 L17.4 391.4 Z" fill="#e8e8e8"/>
  <!-- 19 rectangle -->
  <rect x="8.3" y="403.4" width="10.6" height="9" fill="#6e6e6e" stroke="#e8e8e8" stroke-width="0.9"/>
  <!-- 20 hand -->
  <path d="M10.4 432.6 C9 431 8.2 429.4 8 428.2 C8 427.4 9 427.2 9.6 428 L10.6 429.2 V423.8 C10.6 423 11.8 423 11.8 423.8 V422.8 C11.8 422 13.2 422 13.2 422.8 V423.2 C13.2 422.4 14.6 422.4 14.6 423.2 V424 C14.6 423.4 16 423.4 16 424.2 L16.2 426.4 C17 426.2 17.8 426.4 17.8 427.4 C17.8 429.4 17 431.4 16 432.6 Z" fill="#e6e6e6"/>
  <!-- 21 zoom -->
  <circle cx="12.4" cy="446.2" r="4.2" fill="none" stroke="#e4e4e4" stroke-width="1.3"/>
</svg>
<div class="s" style="left:7px;top:363.6px;width:14px;font-size:13.5px;color:#eaeaea">T</div>
<!-- traffic lights -->
<svg width="801" height="445" viewBox="0 0 801 445">
  <circle cx="9.6" cy="6.45" r="4.4" fill="#fc5f58"/>
  <circle cx="9.6" cy="6.45" r="1.5" fill="#6b0d0a"/>
  <circle cx="24.1" cy="6.45" r="4.35" fill="#fdbb2f"/>
  <circle cx="38.5" cy="6.45" r="4.35" fill="#29c741"/>

  <!-- options bar gripper -->
  <g fill="#656565">
    <rect x="3" y="21.5" width="1" height="1"/><rect x="3" y="24" width="1" height="1"/><rect x="3" y="26.5" width="1" height="1"/><rect x="3" y="29" width="1" height="1"/><rect x="3" y="31.5" width="1" height="1"/><rect x="3" y="34" width="1" height="1"/>
  </g>
  <!-- home -->
  <path d="M12.6 28.4 L19.1 22.3 L25.6 28.4 L23.6 28.4 L23.6 33.2 L20.4 33.2 L20.4 29.8 L17.8 29.8 L17.8 33.2 L14.6 33.2 L14.6 28.4 Z" fill="#e8e8e8"/>
  <!-- move tool (options) -->
  <g id="mv" fill="#e6e6e6" stroke="none">
    <path d="M49.00 22.60 L51.30 24.90 L49.55 24.90 L49.55 27.35 L52.00 27.35 L52.00 25.60 L54.30 27.90 L52.00 30.20 L52.00 28.45 L49.55 28.45 L49.55 30.90 L51.30 30.90 L49.00 33.20 L46.70 30.90 L48.45 30.90 L48.45 28.45 L46.00 28.45 L46.00 30.20 L43.70 27.90 L46.00 25.60 L46.00 27.35 L48.45 27.35 L48.45 24.90 L46.70 24.90 Z"/>
  </g>
  <path d="M62.2 27 L64.5 29.4 L66.8 27" fill="none" stroke="#d8d8d8" stroke-width="1.1"/>
  <!-- checkboxes -->
  <rect x="78.4" y="23.7" width="7.6" height="7.6" rx="1.6" fill="#4a4a4a" stroke="#a0a0a0" stroke-width="0.8"/>
  <rect x="184.4" y="23.7" width="7.6" height="7.6" rx="1.6" fill="#4a4a4a" stroke="#a0a0a0" stroke-width="0.8"/>
  <path d="M169.6 27 L171.9 29.4 L174.2 27" fill="none" stroke="#d8d8d8" stroke-width="1.1"/>
  <!-- align icons -->
  <g fill="#e4e4e4">
    <rect x="312" y="21.8" width="1" height="11"/><rect x="314" y="25" width="4.8" height="2.1"/><rect x="314" y="28.8" width="8" height="3"/>
    <rect x="335.1" y="22" width="1" height="12"/><rect x="332.6" y="25" width="6.2" height="2.1"/><rect x="331.4" y="28.8" width="8.6" height="3"/>
    <rect x="358" y="21.8" width="1" height="11"/><rect x="352.2" y="25" width="4.8" height="2.1"/><rect x="349" y="28.8" width="8" height="3"/>
    <rect x="396" y="24.5" width="10.2" height="1"/><rect x="397.8" y="25" width="3.1" height="7.8"/><rect x="402.4" y="25" width="2.8" height="5"/>
    <rect x="414.4" y="27.9" width="11.2" height="1"/><rect x="416.4" y="24.6" width="3" height="8.2"/><rect x="421.3" y="26" width="2.8" height="5"/>
    <rect x="434" y="31.6" width="10" height="1"/><rect x="435.4" y="22.8" width="3.1" height="8.2"/><rect x="439.8" y="26" width="2.8" height="5"/>
    <circle cx="481.3" cy="28.4" r="1.15"/><circle cx="485.7" cy="28.4" r="1.15"/><circle cx="490.1" cy="28.4" r="1.15"/>
  </g>
  <g fill="#9c9c9c">
    <rect x="371.5" y="27.1" width="7.6" height="2.5"/><rect x="370" y="30.9" width="12" height="0.7"/>
    <rect x="459.4" y="25" width="2.6" height="6.5"/><rect x="463.2" y="22" width="0.7" height="12"/>
  </g>
  <!-- 3D mode icons (disabled) -->
  <g fill="none" stroke="#8e8e8e" stroke-width="0.9">
    <path d="M549.5 27.5 a2.6 2.6 0 0 1 3.5 -2.6 a3.2 3.2 0 0 1 6 1.2 a2.5 2.5 0 0 1 1.5 4.6 M549.5 27.5 v3.5 h4 M555.5 32.8 h4.5"/>
    <circle cx="573.1" cy="28" r="2.6"/>
    <circle cx="573.1" cy="28" r="5.4" stroke-dasharray="5 1.6"/>
    <path transform="translate(591.5 28) scale(1.08) translate(-49 -27.9)" d="M49.00 22.60 L51.30 24.90 L49.55 24.90 L49.55 27.35 L52.00 27.35 L52.00 25.60 L54.30 27.90 L52.00 30.20 L52.00 28.45 L49.55 28.45 L49.55 30.90 L51.30 30.90 L49.00 33.20 L46.70 30.90 L48.45 30.90 L48.45 28.45 L46.00 28.45 L46.00 30.20 L43.70 27.90 L46.00 25.60 L46.00 27.35 L48.45 27.35 L48.45 24.90 L46.70 24.90 Z" stroke-width="0.8" fill="#5e5e5e"/>
    <path d="M608 27 h5 M610.6 24.5 v4"/>
    <path d="M606.5 30.5 a4.2 3 0 0 0 8.2 0"/>
    <circle cx="634.6" cy="28" r="2.4"/>
  </g>
  <g fill="#8e8e8e">
    
    <path d="M610.6 22.4 l1.9 2.3 h-3.8z M605 27 l2.3 -1.9 v3.8z M616.2 27 l-2.3 -1.9 v3.8z"/>
    <ellipse cx="610.6" cy="32.6" rx="2.4" ry="1.1"/>
    <rect x="623" y="25.4" width="7.6" height="5.2"/>
    <rect x="552" y="29.5" width="3" height="2.2"/>
  </g>

  <!-- panel collapse arrows / menus -->
  <g fill="none" stroke="#a4a4a4" stroke-width="0.8">
    <path d="M3.2 43.3 l1.9 1.9 l-1.9 1.9 M6 43.3 l1.9 1.9 l-1.9 1.9"/>
    <path d="M790.6 43.3 l1.9 1.9 l-1.9 1.9 M793.4 43.3 l1.9 1.9 l-1.9 1.9"/>
  </g>
  <g fill="#d6d6d6">
    <rect x="789" y="57.2" width="7.4" height="1.3"/><rect x="789" y="60.2" width="7.4" height="1.3"/>
    <rect x="789" y="245.2" width="7.4" height="1.3"/><rect x="789" y="248.2" width="7.4" height="1.3"/>
  </g>
  <!-- status bar arrow -->
  <path d="M198.4 436.6 l2 2.6 l-2 2.6" fill="none" stroke="#c4c4c4" stroke-width="0.9"/>
</svg>


<!-- ===== text ===== -->
<div class="t" style='left:430.80px;top:1.85px;font-size:9.2px;color:#cfcfcf;letter-spacing:0.34px'>Adobe Photoshop CC 2019</div>
<div class="t" style='left:89.90px;top:22.98px;font-size:6.9px;color:#d0d0d0;letter-spacing:-0.23px'>自動選択:</div>
<div class="t" style='left:135.50px;top:22.50px;font-size:7.2px;color:#dcdcdc;letter-spacing:0.17px'>レイヤー</div>
<div class="t" style='left:193.70px;top:23.18px;font-size:6.8px;color:#d0d0d0;letter-spacing:0.71px'>バウンディングボックスを表示</div>
<div class="t" style='left:501.45px;top:23.30px;font-size:7px;color:#747474;letter-spacing:1px'>3D モード:</div>
<div class="t" style='left:32.55px;top:45.85px;font-size:11.5px;color:#a4a4a4'>×</div>
<div class="t" style='left:46.25px;top:44.70px;font-size:8.5px;color:#a6a6a6;letter-spacing:0.28px'>名称未設定 1.psd @ 100% (楕円形 1, RGB/8#)</div>
<div class="t" style='left:243.05px;top:45.85px;font-size:11.5px;color:#c8c8c8'>×</div>
<div class="t" style='left:256.75px;top:44.70px;font-size:8.5px;color:#dedede;letter-spacing:0.18px'>名称未設定 1 @ 50% (レイヤー 1, RGB/8#) *</div>
<div class="t" style='left:46.42px;top:103.25px;font-size:7.5px;color:#f4f4f4;transform:scaleX(0.957);font-weight:bold;-webkit-text-stroke:0.3px #f4f4f4'>アートボード 1</div>
<div class="t" style='left:41.65px;top:433.98px;font-size:8.2px;color:#f0f0f0;letter-spacing:0.1px'>50%</div>
<div class="t" style='left:89.00px;top:434.07px;font-size:8px;color:#d8d8d8;letter-spacing:0.15px'>ファイル : 3.00M/4.00M</div>
<div class="t" style='left:579.75px;top:55.08px;font-size:8px;color:#e6e6e6;letter-spacing:0.15px'>文字</div>
<div class="t" style='left:608.25px;top:55.08px;font-size:8px;color:#9c9c9c;letter-spacing:0.2px'>段落</div>
<div class="t" style='left:637.45px;top:55.08px;font-size:8px;color:#9c9c9c;letter-spacing:-0.22px'>文字スタイル</div>
<div class="t" style='left:579.70px;top:81.17px;font-size:8.3px;color:#e2e2e2;letter-spacing:0.01px'>Noto Sans JP Med...</div>
<div class="t" style='left:682.87px;top:80.72px;font-size:8.3px;color:#909090;transform:scaleX(1.333)'>-</div>
<div class="t" style='left:595.20px;top:100.15px;font-size:8px;color:#dadada'>18 px</div>
<div class="t" style='left:681.45px;top:100.15px;font-size:8px;color:#dadada;letter-spacing:0.26px'>93 px</div>
<div class="t" style='left:594.15px;top:115.70px;font-size:7.2px;color:#d4d4d4;transform:scaleX(0.895);font-feature-settings:"palt"'>メトリクス</div>
<div class="t" style='left:682.25px;top:115.95px;font-size:8px;color:#dadada'>0</div>
<div class="t" style='left:595.76px;top:131.55px;font-size:8px;color:#dadada;transform:scaleX(0.945)'>0%</div>
<div class="t" style='left:595.50px;top:147.35px;font-size:8px;color:#a4a4a4;letter-spacing:0.15px'>100%</div>
<div class="t" style='left:701.50px;top:147.35px;font-size:8px;color:#a4a4a4;letter-spacing:-0.02px'>100%</div>
<div class="t" style='left:596.45px;top:163.45px;font-size:8px;color:#dadada;letter-spacing:0.32px'>0 px</div>
<div class="t" style='left:668.75px;top:164.20px;font-size:7px;color:#b4b4b4;letter-spacing:0.55px'>カラー :</div>
<div class="t" style='left:583.75px;top:220.45px;font-size:7.8px;color:#dadada;letter-spacing:-0.22px'>英語 (米国)</div>
<div class="t" style='left:695.95px;top:220.45px;font-size:7.8px;color:#dadada;letter-spacing:-0.27px'>シャープ</div>
<div class="t" style='left:579.25px;top:242.00px;font-size:8.5px;color:#e8e8e8;letter-spacing:-0.18px'>レイヤー</div>
<div class="t" style='left:624.16px;top:242.88px;font-size:8px;color:#9c9c9c;transform:scaleX(0.968)'>属性</div>
<div class="t" style='left:590.75px;top:266.23px;font-size:7.5px;color:#dadada;letter-spacing:0.5px'>種類</div>
<div class="t" style='left:581.15px;top:287.62px;font-size:7.3px;color:#c4c4c4;letter-spacing:0.2px'>通常</div>
<div class="t" style='left:699.45px;top:287.10px;font-size:7.1px;color:#d0d0d0;letter-spacing:0.4px'>不透明度 :</div>
<div class="t" style='left:737.20px;top:287.45px;font-size:8px;color:#dadada;letter-spacing:0.42px'>100%</div>
<div class="t" style='left:576.00px;top:307.10px;font-size:7.1px;color:#cccccc;letter-spacing:0.66px'>ロック :</div>
<div class="t" style='left:714.45px;top:307.30px;font-size:7.1px;color:#d0d0d0;letter-spacing:0.42px'>塗り :</div>
<div class="t" style='left:737.20px;top:307.95px;font-size:8px;color:#dadada;letter-spacing:0.42px'>100%</div>
<div class="t" style='left:610.29px;top:329.75px;font-size:7.6px;color:#f4f4f4;transform:scaleX(0.944);font-weight:bold;-webkit-text-stroke:0.25px #f4f4f4'>アートボード 1</div>
<div class="t" style='left:637.08px;top:350.07px;font-size:8px;color:#e2e2e2;transform:scaleX(0.923)'>レイヤー 1</div>
<div class="t" style='left:633.16px;top:365.50px;font-size:7.2px;color:#d4d4d4;transform:scaleX(0.964)'>効果</div>
<div class="t" style='left:645.15px;top:379.02px;font-size:7.5px;color:#dcdcdc;letter-spacing:-0.24px'>カラーオーバーレイ</div>
</div>
</body>
</html>
